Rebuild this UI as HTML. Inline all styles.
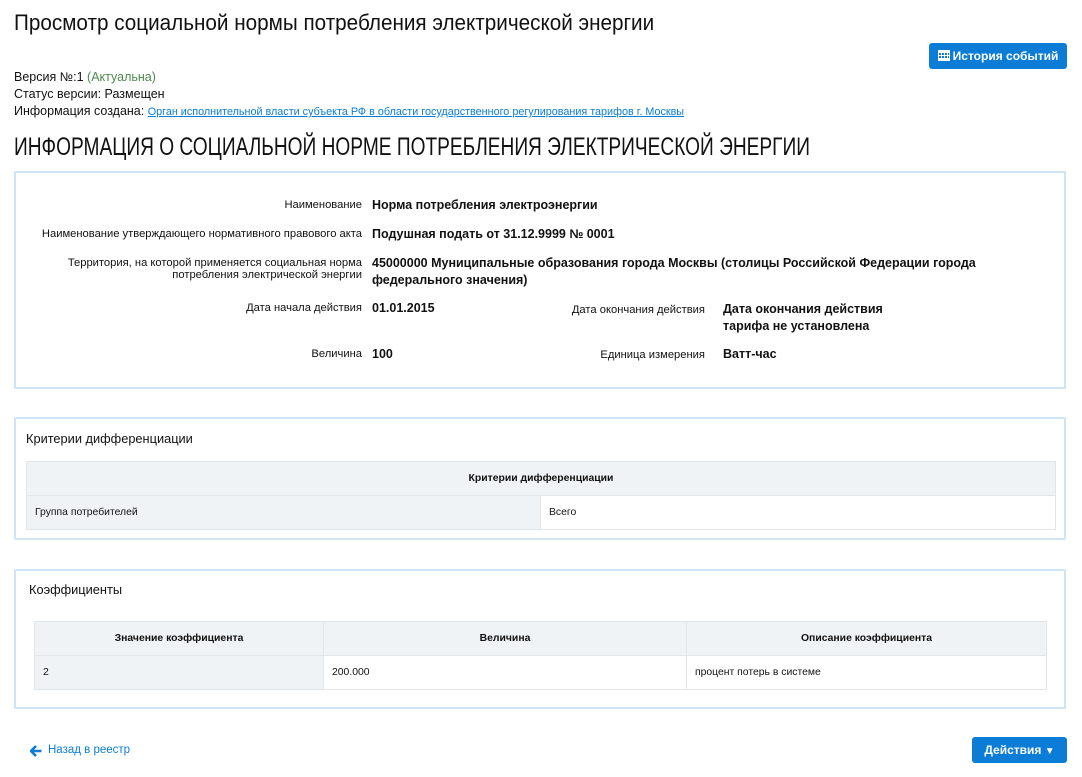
<!DOCTYPE html><html><head><meta charset="utf-8"><style>
body{margin:0;width:1082px;height:777px;background:#fff;position:relative;font-family:"Liberation Sans",sans-serif;color:#111;overflow:hidden}
.a{position:absolute;white-space:nowrap}
.p{position:absolute;left:14px;width:1048px;border:2px solid #cfe4f5;border-radius:2px}
.lbl{font-size:11.2px;text-align:right;width:340px}
.val{font-size:12.5px;font-weight:bold}
table{position:absolute;border-collapse:collapse;font-family:"Liberation Sans",sans-serif;font-size:10.4px}
td,th{border:1px solid #e2e6ea;padding:0 8px;height:33px}
th{background:#f0f3f6;font-weight:bold}
.g{background:#f0f3f6}
.btn{position:absolute;background:#0b7dd6;color:#fff;border-radius:3px;font-size:12px;font-weight:bold;text-align:center}
</style></head><body>
<div class="a" style="left:14px;top:10px;font-size:22px;transform:scaleX(0.94);transform-origin:left">Просмотр социальной нормы потребления электрической энергии</div>
<div class="btn" style="left:929px;top:43px;width:138px;height:26px;line-height:26px"><svg width="12" height="12" style="vertical-align:-1px;margin-right:3px" viewBox="0 0 12 12"><rect x="0" y="1" width="12" height="11" fill="#fff"/><g fill="#0b7dd6"><rect x="1" y="4" width="2" height="2"/><rect x="4" y="4" width="2" height="2"/><rect x="7" y="4" width="2" height="2"/><rect x="1" y="7" width="2" height="2"/><rect x="4" y="7" width="2" height="2"/><rect x="7" y="7" width="2" height="2"/><rect x="10" y="4" width="1" height="2"/><rect x="10" y="7" width="1" height="2"/></g></svg>История событий</div>
<div class="a" style="left:14px;top:69px;font-size:12.5px;line-height:17px">Версия №:1 <span style="color:#4d8a4d">(Актуальна)</span><br>Статус версии: Размещен<br>Информация создана: <span style="color:#0b7dd6;text-decoration:underline;font-size:10.8px">Орган исполнительной власти субъекта РФ в области государственного регулирования тарифов г. Москвы</span></div>
<div class="a" style="left:14px;top:133px;font-size:25px;transform:scaleX(0.765);transform-origin:left">ИНФОРМАЦИЯ О СОЦИАЛЬНОЙ НОРМЕ ПОТРЕБЛЕНИЯ ЭЛЕКТРИЧЕСКОЙ ЭНЕРГИИ</div>
<div class="p" style="top:171px;height:214px"></div>
<div class="a lbl" style="left:22px;top:199px">Наименование</div><div class="a val" style="left:372px;top:198px">Норма потребления электроэнергии</div>
<div class="a lbl" style="left:22px;top:228px">Наименование утверждающего нормативного правового акта</div><div class="a val" style="left:372px;top:227px">Подушная подать от 31.12.9999 № 0001</div>
<div class="a lbl" style="left:22px;top:257px;line-height:12px">Территория, на которой применяется социальная норма<br>потребления электрической энергии</div><div class="a val" style="left:372px;top:255px;line-height:17px">45000000 Муниципальные образования города Москвы (столицы Российской Федерации города<br>федерального значения)</div>
<div class="a lbl" style="left:22px;top:302px">Дата начала действия</div><div class="a val" style="left:372px;top:301px">01.01.2015</div>
<div class="a lbl" style="left:365px;top:304px">Дата окончания действия</div><div class="a val" style="left:723px;top:301px;line-height:17px">Дата окончания действия<br>тарифа не установлена</div>
<div class="a lbl" style="left:22px;top:348px">Величина</div><div class="a val" style="left:372px;top:347px">100</div>
<div class="a lbl" style="left:365px;top:349px">Единица измерения</div><div class="a val" style="left:723px;top:347px">Ватт-час</div>
<div class="p" style="top:417px;height:119px"></div>
<div class="a" style="left:26px;top:431px;font-size:12.8px">Критерии дифференциации</div>
<table style="left:26px;top:461px;width:1030px"><tr><th colspan="2">Критерии дифференциации</th></tr><tr><td class="g" style="width:497px">Группа потребителей</td><td>Всего</td></tr></table>
<div class="p" style="top:569px;height:136px"></div>
<div class="a" style="left:29px;top:582px;font-size:12.8px">Коэффициенты</div>
<table style="left:34px;top:621px;width:1013px"><tr><th style="width:272px">Значение коэффициента</th><th style="width:346px">Величина</th><th>Описание коэффициента</th></tr><tr><td class="g">2</td><td>200.000</td><td>процент потерь в системе</td></tr></table>
<svg class="a" style="left:30px;top:745px" width="12" height="12" viewBox="0 0 12 12"><path d="M6 1 L1 6 L6 11 M1.5 6 H11.5" stroke="#0b7dd6" stroke-width="2.6" fill="none"/></svg>
<div class="a" style="left:48px;top:744px;font-size:11.5px;color:#0b7dd6">Назад в реестр</div>
<div class="btn" style="left:972px;top:737px;width:95px;height:26px;line-height:26px">Действия <span style="font-size:10px">&#9660;</span></div>
</body></html>
